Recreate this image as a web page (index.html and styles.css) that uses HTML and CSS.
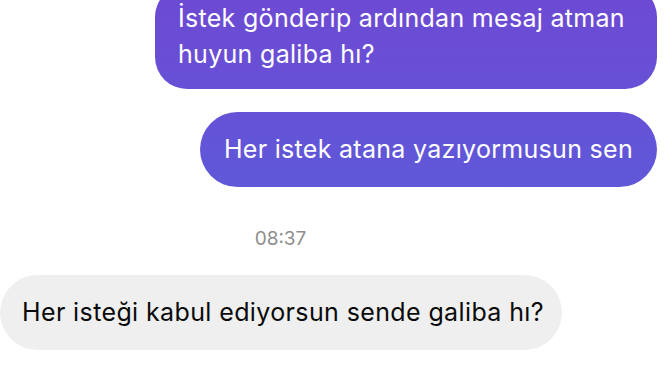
FILE: index.html
```html
<!DOCTYPE html>
<html>
	<head>
		<meta charset="UTF-8">
		<title>Mesajlar</title>
		<link rel="stylesheet" href="styles.css">
	</head>
	<body>
		<section class="chat">
			<div class="row sent">
				<div class="bubble out first">İstek gönderip ardından mesaj atman huyun galiba hı?</div>
			</div>
			<div class="row sent">
				<div class="bubble out">Her istek atana yazıyormusun sen</div>
			</div>
			<div class="time">08:37</div>
			<div class="row received">
				<div class="bubble in">Her isteği kabul ediyorsun sende galiba hı?</div>
			</div>
		</section>
	</body>
</html>
```

FILE: styles.css
```css
html,body{
	margin: 0;
	padding: 0;
	background: #fff;
}
body{
	width: 672px;
	height: 378px;
	overflow: hidden;
	font-family: Inter, "Noto Sans", sans-serif;
}
.chat{
	display: flex;
	flex-direction: column;
	padding: 0 15px 0 0;
}
.row{
	display: flex;
}
.sent{
	justify-content: flex-end;
}
.received{
	justify-content: flex-start;
}
.bubble{
	font-size: 25px;
	line-height: 36px;
	letter-spacing: 0.3px;
	padding: 19px 24px 20px 24px;
	border-radius: 38px;
}
.out{
	color: #fff;
	background: linear-gradient(180deg, #6d4ad3 0%, #6751d6 25%, #5d5ad9 55%, #5864db 100%);
	background-attachment: fixed;
}
.first{
	max-width: 456px;
	margin-top: -15px;
	padding: 15px 23px 17px 23px;
	border-radius: 32px;
}
.sent + .sent{
	margin-top: 23px;
}
.time{
	align-self: center;
	margin: 40px 96px 0 0;
	font-size: 19px;
	line-height: 24px;
	color: #8e8e8e;
}
.received{
	margin-top: 24px;
}
.in{
	color: #0a0a0a;
	background: #efefef;
	letter-spacing: 0.38px;
	padding-left: 22px;
	padding-right: 18px;
}
```
